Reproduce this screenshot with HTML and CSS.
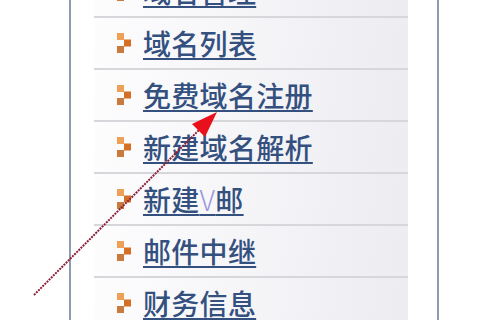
FILE: index.html
```html
<!DOCTYPE html>
<html lang="zh">
<head>
<meta charset="utf-8">
<link rel="stylesheet" href="styles.css">
</head>
<body>
<div class="page">
  <div class="gutter"></div>
  <div class="panel">
    <ul class="menu">
      <li class="item"><svg class="bullet" viewBox="0 0 14 20"><rect x="0" y="0" width="7" height="7" fill="#eea056"/><rect x="7" y="6.5" width="7" height="7" fill="#d66f26"/><rect x="0" y="13" width="7" height="7" fill="#c97a3c"/></svg><a class="link" href="#">域名管理</a></li>
      <li class="item"><svg class="bullet" viewBox="0 0 14 20"><rect x="0" y="0" width="7" height="7" fill="#eea056"/><rect x="7" y="6.5" width="7" height="7" fill="#d66f26"/><rect x="0" y="13" width="7" height="7" fill="#c97a3c"/></svg><a class="link" href="#">域名列表</a></li>
      <li class="item"><svg class="bullet" viewBox="0 0 14 20"><rect x="0" y="0" width="7" height="7" fill="#eea056"/><rect x="7" y="6.5" width="7" height="7" fill="#d66f26"/><rect x="0" y="13" width="7" height="7" fill="#c97a3c"/></svg><a class="link" href="#">免费域名注册</a></li>
      <li class="item"><svg class="bullet" viewBox="0 0 14 20"><rect x="0" y="0" width="7" height="7" fill="#eea056"/><rect x="7" y="6.5" width="7" height="7" fill="#d66f26"/><rect x="0" y="13" width="7" height="7" fill="#c97a3c"/></svg><a class="link" href="#">新建域名解析</a></li>
      <li class="item"><svg class="bullet" viewBox="0 0 14 20"><rect x="0" y="0" width="7" height="7" fill="#eea056"/><rect x="7" y="6.5" width="7" height="7" fill="#d66f26"/><rect x="0" y="13" width="7" height="7" fill="#c97a3c"/></svg><a class="link" href="#">新建<span class="v">V</span>邮</a></li>
      <li class="item"><svg class="bullet" viewBox="0 0 14 20"><rect x="0" y="0" width="7" height="7" fill="#eea056"/><rect x="7" y="6.5" width="7" height="7" fill="#d66f26"/><rect x="0" y="13" width="7" height="7" fill="#c97a3c"/></svg><a class="link" href="#">邮件中继</a></li>
      <li class="item"><svg class="bullet" viewBox="0 0 14 20"><rect x="0" y="0" width="7" height="7" fill="#eea056"/><rect x="7" y="6.5" width="7" height="7" fill="#d66f26"/><rect x="0" y="13" width="7" height="7" fill="#c97a3c"/></svg><a class="link" href="#">财务信息</a></li>
    </ul>
  </div>
</div>
<svg class="pointer" viewBox="0 0 480 320" width="480" height="320">
  <line x1="34" y1="295" x2="204" y2="125" stroke="#8a1f3a" stroke-width="2" stroke-dasharray="2 1"/>
  <polygon points="217,112 192,124 205,137" fill="#e8101a"/>
</svg>
</body>
</html>
```

FILE: styles.css
```css
html, body {
  margin: 0;
  padding: 0;
  background: #ffffff;
}
body {
  width: 480px;
  height: 320px;
  overflow: hidden;
  position: relative;
  font-family: "Noto Sans CJK SC", "Noto Sans", sans-serif;
}
.page {
  display: flex;
  height: 320px;
}
.gutter {
  width: 69px;
  flex: none;
}
.panel {
  width: 314px;
  flex: none;
  border-left: 2px solid #8f9cab;
  border-right: 2px solid #8f9cab;
  padding: 0 29px 0 23px;
  background: #ffffff;
}
.menu {
  list-style: none;
  margin: -34px 0 0 0;
  padding: 0;
}
.item {
  height: 50px;
  border-bottom: 2px solid #d6d7db;
  display: flex;
  align-items: center;
  padding-left: 23px;
  background: linear-gradient(100deg, #fdfdfe 0%, #f5f5f8 50%, #ececf1 100%);
}
.bullet {
  width: 14px;
  height: 20px;
  flex: none;
  margin-right: 12px;
}
.link {
  font-size: 28px;
  font-weight: 500;
  line-height: 34px;
  color: #34507f;
  text-decoration: underline;
  text-decoration-thickness: 2px;
  text-underline-offset: 3px;
  letter-spacing: 0.3px;
}
.v {
  font-weight: 300;
  color: #9a96e0;
}
.pointer {
  position: absolute;
  left: 0;
  top: 0;
}
```
